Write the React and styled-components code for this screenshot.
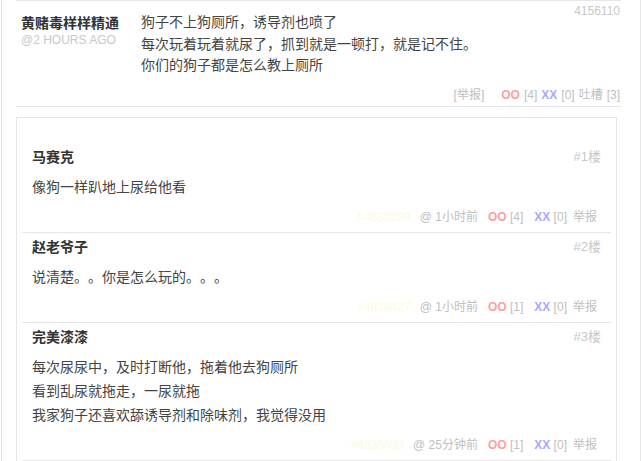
import React from "react";
import styled, { createGlobalStyle } from "styled-components";

const GlobalStyle = createGlobalStyle`
  html, body { margin: 0; padding: 0; overflow: hidden; background: #fff; }
  body {
    font-family: "Liberation Sans", "Noto Sans CJK SC", sans-serif;
    text-spacing-trim: space-all;
  }
`;

const Page = styled.div`
  margin-left: 1px;
  width: 638px;
  min-height: 100vh;
  border-left: 1px solid #e6e6e6;
  border-right: 1px solid #e6e6e6;
`;

const Post = styled.div`
  margin: 0 19px 0 14px;
  padding: 0 1px 2.5px 5px;
  border-top: 1px solid #e6e6e6;
  border-bottom: 1px solid #e6e6e6;
`;

const PostBody = styled.div`
  display: grid;
  grid-template-columns: 120px 1fr auto;
  align-items: start;
`;

const Author = styled.div`
  padding-top: 12px;
  white-space: nowrap;
`;

const AuthorName = styled.div`
  font-size: 14px;
  font-weight: bold;
  line-height: 20px;
  color: #333;
`;

const PostTime = styled.div`
  font-size: 12px;
  line-height: 14px;
  color: #c8c8c8;
  text-transform: uppercase;
`;

const PostText = styled.div`
  padding-top: 11px;
  font-size: 14px;
  line-height: 21.5px;
  color: #444;
`;

const PostId = styled.div`
  font-size: 12px;
  line-height: 18px;
  padding-top: 1px;
  color: #c8c8c8;
`;

const PostFooter = styled.div`
  display: flex;
  justify-content: flex-end;
  gap: 4px;
  margin-top: 9px;
  font-size: 12px;
  line-height: 18px;
  color: #c0c0c0;
  white-space: nowrap;
`;

const Report = styled.span`
  margin-right: ${(p) => p.$gap || 0}px;
`;

const Vote = styled.span`
  font-weight: bold;
  color: ${(p) => (p.$tone === "oo" ? "#ff9e9e" : "#a9a9ff")};
`;

const Muted = styled.span`
  margin-left: ${(p) => p.$ml || 0}px;
`;

const CommentBox = styled.div`
  margin: 10px 23px 0 14px;
  padding-top: 25px;
  border: 1px solid #e6e6e6;
  border-bottom: none;
`;

const CommentList = styled.div`
  margin: 0 5px;
`;

const Comment = styled.div`
  padding: 4px 10px 5px;
  border-bottom: 1px solid #e6e6e6;
`;

const CommentHead = styled.div`
  display: flex;
  justify-content: space-between;
  align-items: center;
  line-height: 20px;
`;

const CommentName = styled.span`
  font-size: 14px;
  font-weight: bold;
  color: #333;
`;

const Floor = styled.span`
  font-size: 13px;
  color: #c8c8c8;
`;

const CommentText = styled.div`
  margin-top: 8px;
  font-size: 14px;
  line-height: 24px;
  color: #444;
`;

const CommentFooter = styled.div`
  display: flex;
  justify-content: flex-end;
  margin-top: 8px;
  padding-right: 4px;
  font-size: 12px;
  line-height: 20px;
  color: #c0c0c0;
  white-space: nowrap;
`;

const CommentId = styled.span`
  color: #fcfae4;
`;

const comments = [
  {
    name: "马赛克",
    floor: 1,
    lines: ["像狗一样趴地上尿给他看"],
    id: "#4838299",
    time: "1小时前",
    oo: 4,
    xx: 0,
  },
  {
    name: "赵老爷子",
    floor: 2,
    lines: ["说清楚。。你是怎么玩的。。。"],
    id: "#4838427",
    time: "1小时前",
    oo: 1,
    xx: 0,
  },
  {
    name: "完美漆漆",
    floor: 3,
    lines: [
      "每次尿尿中，及时打断他，拖着他去狗厕所",
      "看到乱尿就拖走，一尿就拖",
      "我家狗子还喜欢舔诱导剂和除味剂，我觉得没用",
    ],
    id: "#4838693",
    time: "25分钟前",
    oo: 1,
    xx: 0,
  },
];

export default function App() {
  return (
    <>
      <GlobalStyle />
      <Page>
        <Post>
          <PostBody>
            <Author>
              <AuthorName>黄赌毒样样精通</AuthorName>
              <PostTime>@2 hours ago</PostTime>
            </Author>
            <PostText>
              <div>狗子不上狗厕所，诱导剂也喷了</div>
              <div>每次玩着玩着就尿了，抓到就是一顿打，就是记不住。</div>
              <div>你们的狗子都是怎么教上厕所</div>
            </PostText>
            <PostId>4156110</PostId>
          </PostBody>
          <PostFooter>
            <Report $gap={13}>[举报]</Report>
            <Vote $tone="oo">OO</Vote>
            <span>[4]</span>
            <Vote $tone="xx">XX</Vote>
            <span>[0]</span>
            <span>吐槽</span>
            <span>[3]</span>
          </PostFooter>
        </Post>
        <CommentBox>
          <CommentList>
            {comments.map((c) => (
              <Comment key={c.floor}>
                <CommentHead>
                  <CommentName>{c.name}</CommentName>
                  <Floor>#{c.floor}楼</Floor>
                </CommentHead>
                <CommentText>
                  {c.lines.map((l, i) => (
                    <div key={i}>{l}</div>
                  ))}
                </CommentText>
                <CommentFooter>
                  <CommentId>{c.id}</CommentId>
                  <Muted $ml={9}>@ {c.time}</Muted>
                  <Muted $ml={10}>
                    <Vote $tone="oo">OO</Vote> [{c.oo}]
                  </Muted>
                  <Muted $ml={11}>
                    <Vote $tone="xx">XX</Vote> [{c.xx}]
                  </Muted>
                  <Muted $ml={6}>举报</Muted>
                </CommentFooter>
              </Comment>
            ))}
          </CommentList>
        </CommentBox>
      </Page>
    </>
  );
}
